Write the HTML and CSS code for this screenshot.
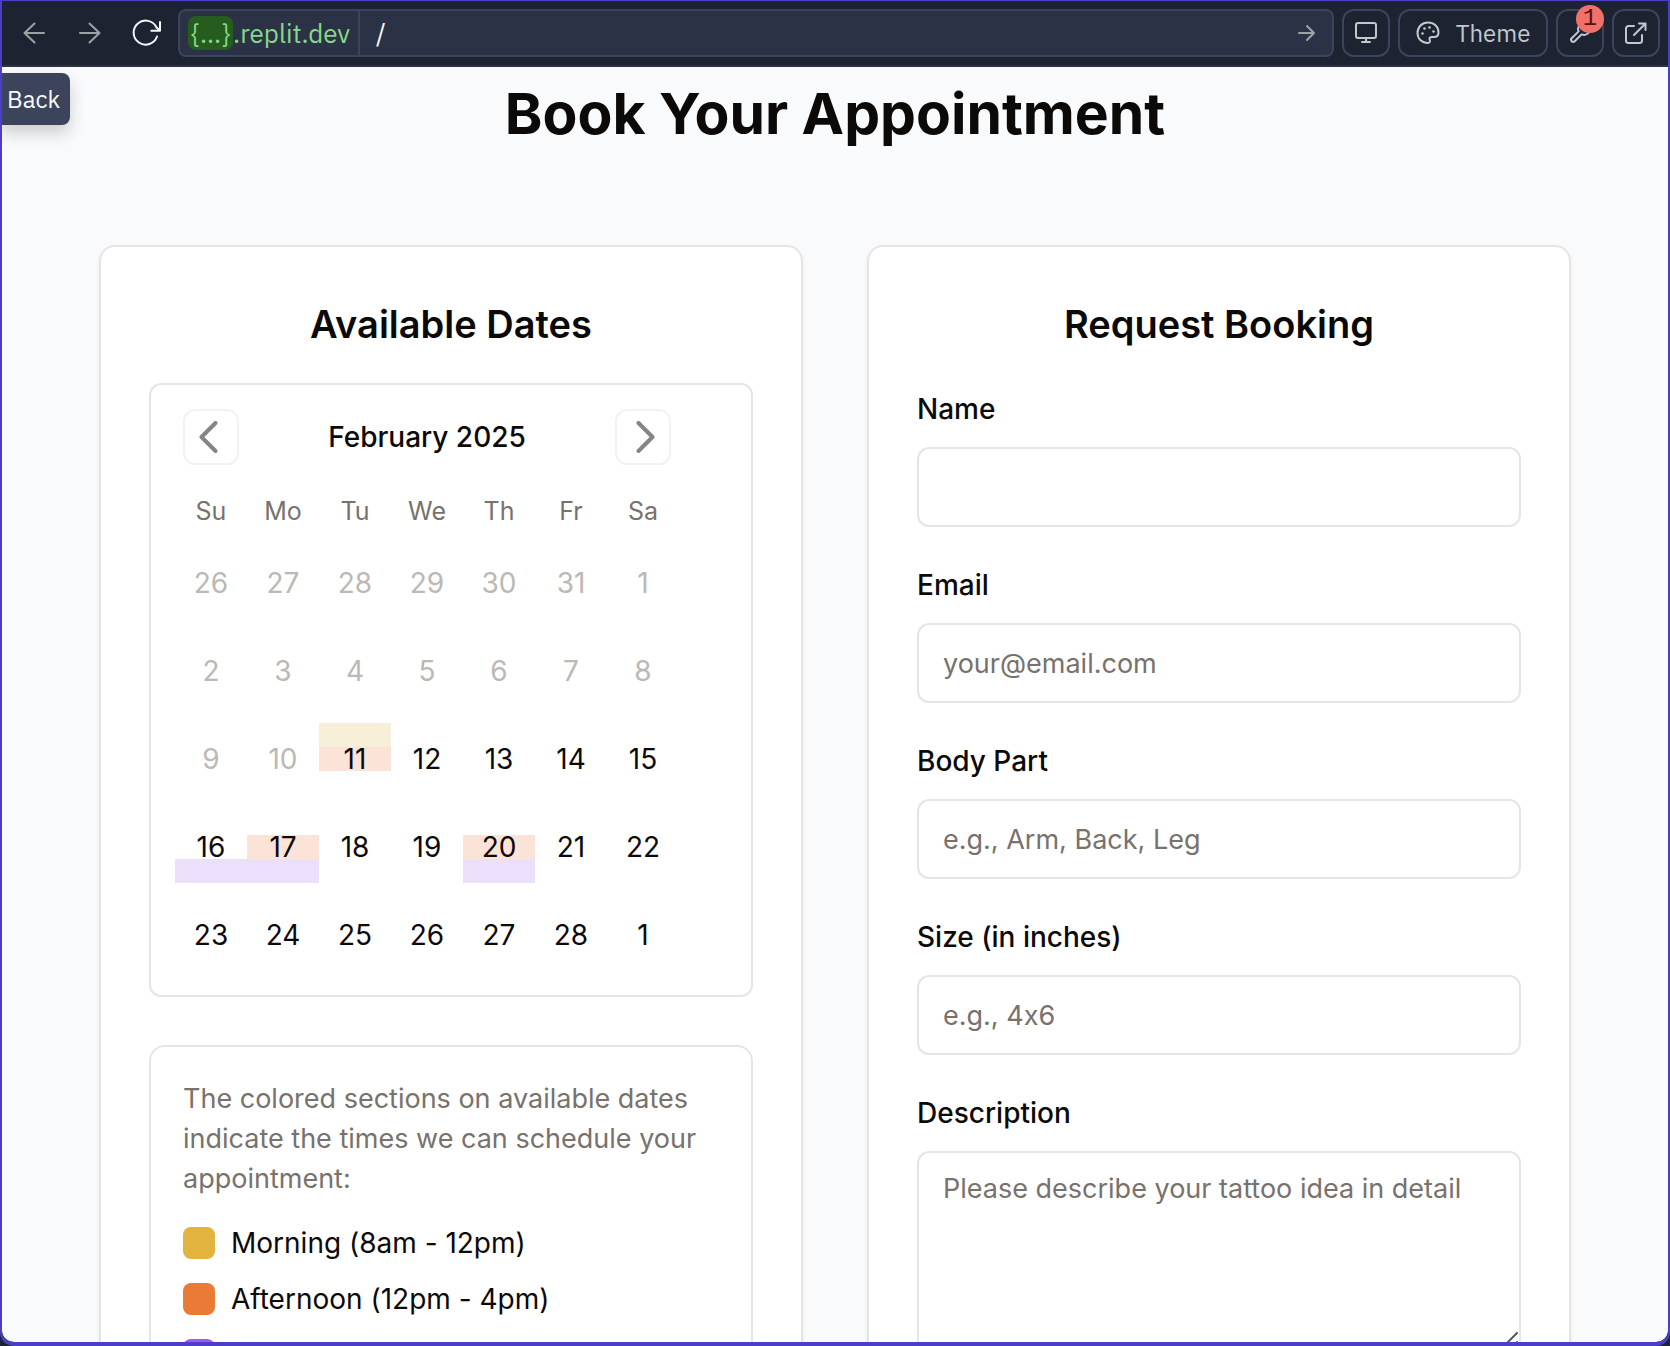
FILE: index.html
```html
<!DOCTYPE html>
<html lang="en">
<head>
<meta charset="utf-8">
<meta name="viewport" content="width=device-width, initial-scale=1">
<title>Book Your Appointment</title>
<link rel="stylesheet" href="styles.css">
</head>
<body>
<div class="frame">
  <header class="toolbar">
    <nav class="history" aria-label="History">
      <button class="nav-btn" type="button" aria-label="Back"><svg width="24" height="24" viewBox="0 0 24 24"><path d="M22 12H2.500M12.500 2.500 2.500 12l10 9.500"/></svg></button>
      <button class="nav-btn" type="button" aria-label="Forward"><svg width="24" height="24" viewBox="0 0 24 24"><path d="M2 12h19.500M11.500 2.500l10 9.500-10 9.500"/></svg></button>
      <button class="nav-btn reload" type="button" aria-label="Reload"><svg width="32" height="32" viewBox="0 0 32 32"><path d="M27 19.500A12 12 0 1 1 26.500 10.500L30 13.500M30 5v8.700h-8.700"/></svg></button>
    </nav>
    <div class="address">
      <span class="host"><span class="host-pill">{...}</span>.replit.dev</span>
      <input class="path" type="text" value="/" aria-label="Path">
      <button class="go" type="button" aria-label="Go"><svg width="18" height="18" viewBox="0 0 18 18"><path d="M1 9h15M9 2l7 7-7 7"/></svg></button>
    </div>
    <button class="tool" type="button" aria-label="Device size"><svg width="24" height="24" viewBox="0 0 24 24"><rect x="2" y="2" width="20" height="15" rx="2"/><path d="M12 17v4M8 21h8"/></svg></button>
    <button class="tool tool-theme" type="button">
      <svg width="24" height="24" viewBox="0 0 24 24"><path d="M12 1.500C6 1.500 1.500 6 1.500 12S6 22 12 22c1.800 0 2.300-1.500 1.700-2.800-.8-1.800.2-3.200 2.100-3.200H18c3 0 4.500-2 4.500-4.500C22.500 5.500 18 1.500 12 1.500z"/><g class="dots"><circle cx="6.500" cy="12.500" r="1.300"/><circle cx="8.500" cy="7.500" r="1.300"/><circle cx="13.500" cy="6.500" r="1.300"/><circle cx="17.500" cy="10.500" r="1.300"/></g></svg>
      <span>Theme</span>
    </button>
    <button class="tool" type="button" aria-label="Developer tools, 1 issue"><svg width="24" height="24" viewBox="0 0 24 24"><path d="M14.700 6.300a1 1 0 0 0 0 1.400l1.600 1.600a1 1 0 0 0 1.400 0l3.800-3.800a6 6 0 0 1-7.900 7.900l-6.900 6.900a2.100 2.100 0 0 1-3-3l6.900-6.900a6 6 0 0 1 7.900-7.900z"/></svg><span class="count">1</span></button>
    <button class="tool" type="button" aria-label="Open in new tab"><svg width="24" height="24" viewBox="0 0 24 24"><path d="M10 5H4.500A2.500 2.500 0 0 0 2 7.500v12A2.500 2.500 0 0 0 4.500 22h11a2.500 2.500 0 0 0 2.500-2.500V14M15 2.500h6.500V9M21.500 2.500 10 14"/></svg></button>
  </header>
  <div class="tooltip" role="tooltip">Back</div>

  <main class="preview">
    <h1>Book Your Appointment</h1>
    <div class="columns">
      <section class="card">
        <h2>Available Dates</h2>
        <div class="calendar">
          <div class="calendar-inner">
            <div class="month-bar">
              <button class="month-btn" type="button" aria-label="Previous month"><svg width="32" height="32" viewBox="0 0 32 32"><path d="M20.500 2 6.500 16l14 14"/></svg></button>
              <div class="month">February 2025</div>
              <button class="month-btn" type="button" aria-label="Next month"><svg width="32" height="32" viewBox="0 0 32 32"><path d="M11.500 2l14 14-14 14"/></svg></button>
            </div>
            <table class="days">
              <thead><tr><th>Su</th><th>Mo</th><th>Tu</th><th>We</th><th>Th</th><th>Fr</th><th>Sa</th></tr></thead>
              <tbody>
                <tr><td><button type="button" disabled>26</button></td><td><button type="button" disabled>27</button></td><td><button type="button" disabled>28</button></td><td><button type="button" disabled>29</button></td><td><button type="button" disabled>30</button></td><td><button type="button" disabled>31</button></td><td><button type="button" disabled>1</button></td></tr>
                <tr><td><button type="button" disabled>2</button></td><td><button type="button" disabled>3</button></td><td><button type="button" disabled>4</button></td><td><button type="button" disabled>5</button></td><td><button type="button" disabled>6</button></td><td><button type="button" disabled>7</button></td><td><button type="button" disabled>8</button></td></tr>
                <tr><td><button type="button" disabled>9</button></td><td><button type="button" disabled>10</button></td><td><button type="button" class="morning afternoon">11</button></td><td><button type="button">12</button></td><td><button type="button">13</button></td><td><button type="button">14</button></td><td><button type="button">15</button></td></tr>
                <tr><td><button type="button" class="evening">16</button></td><td><button type="button" class="afternoon evening">17</button></td><td><button type="button">18</button></td><td><button type="button">19</button></td><td><button type="button" class="afternoon evening">20</button></td><td><button type="button">21</button></td><td><button type="button">22</button></td></tr>
                <tr><td><button type="button">23</button></td><td><button type="button">24</button></td><td><button type="button">25</button></td><td><button type="button">26</button></td><td><button type="button">27</button></td><td><button type="button">28</button></td><td><button type="button">1</button></td></tr>
              </tbody>
            </table>
          </div>
        </div>
        <div class="legend">
          <p>The colored sections on available dates indicate the times we can schedule your appointment:</p>
          <ul>
            <li><span class="swatch swatch-morning"></span>Morning (8am - 12pm)</li>
            <li><span class="swatch swatch-afternoon"></span>Afternoon (12pm - 4pm)</li>
            <li><span class="swatch swatch-evening"></span></li>
          </ul>
        </div>
      </section>

      <section class="card">
        <h2>Request Booking</h2>
        <form class="form">
          <div class="field"><label for="name">Name</label><input id="name" type="text"></div>
          <div class="field"><label for="email">Email</label><input id="email" type="email" placeholder="your@email.com"></div>
          <div class="field"><label for="part">Body Part</label><input id="part" type="text" placeholder="e.g., Arm, Back, Leg"></div>
          <div class="field"><label for="size">Size (in inches)</label><input id="size" type="text" placeholder="e.g., 4x6"></div>
          <div class="field">
            <label for="description">Description</label>
            <div class="area">
              <textarea id="description" placeholder="Please describe your tattoo idea in detail"></textarea>
              <svg class="grip" width="20" height="20" viewBox="0 0 20 20"><path d="M2 18 18 2M11 18l7-7"/></svg>
            </div>
          </div>
        </form>
      </section>
    </div>
  </main>
</div>
</body>
</html>
```
FILE: styles.css
```css
* { box-sizing: border-box; }

body {
  margin: 0;
  background: #1c2333;
  color: #0c0a09;
  font-family: Inter, "Liberation Sans", sans-serif;
  font-size: 28px;
  font-variant-ligatures: no-contextual;
  line-height: 40px;
}

button, input, textarea { font: inherit; color: inherit; font-variant-ligatures: inherit; }
button { padding: 0; border: 0; background: none; }
svg { display: block; flex: none; fill: none; stroke: currentColor; stroke-width: 2; stroke-linecap: round; stroke-linejoin: round; }

.frame {
  position: relative;
  display: flex;
  flex-direction: column;
  height: 100vh;
  overflow: hidden;
  border: 2px solid #4b3fc9;
  border-top-width: 1px;
  border-bottom-width: 4px;
  border-radius: 0 0 14px 14px;
}

/* Browser toolbar */
.toolbar {
  display: flex;
  flex: none;
  align-items: center;
  gap: 8px;
  height: 66px;
  padding: 0 8px 0 4px;
  border-bottom: 2px solid #2b3245;
  background: #1e2332;
  color: #c2c8cc;
  font-family: "IBM Plex Sans", "Noto Sans", sans-serif;
  font-size: 24px;
  line-height: 32px;
}
.history { display: flex; }
.nav-btn { display: flex; align-items: center; justify-content: center; width: 56px; height: 48px; color: #9da2a6; }
.reload { color: #f5f9fc; }

.address {
  display: flex;
  flex: 1;
  align-items: stretch;
  height: 48px;
  margin-left: -4px;
  border: 2px solid #3c445c;
  border-radius: 8px;
  background: #2b3245;
  font-size: 26px;
}
.host { display: flex; align-items: center; padding: 0 8px; border-right: 2px solid #3c445c; color: #86d88a; }
.host-pill { padding: 0 3px; border-radius: 8px; background: #265c1e; line-height: 34px; }
.path { flex: 1; min-width: 0; padding: 0 16px; border: 0; background: none; color: #f5f9fc; outline: 0; }
.go { display: flex; align-items: center; padding: 0 16px; color: #9da2a6; }

.tool {
  position: relative;
  display: flex;
  align-items: center;
  justify-content: center;
  width: 48px;
  height: 48px;
  border: 2px solid #3c445c;
  border-radius: 12px;
}
.tool-theme { gap: 16px; width: 150px; }
.dots { fill: currentColor; stroke: none; }
.count {
  position: absolute;
  top: -6px;
  right: -2px;
  width: 28px;
  height: 28px;
  border-radius: 14px;
  background: #f0716a;
  color: #5c0f0c;
  font-family: "Liberation Mono", monospace;
  line-height: 28px;
  text-align: center;
}

.tooltip {
  position: absolute;
  top: 72px;
  left: -2px;
  z-index: 1;
  padding: 10px 10px 10px 7px;
  border-radius: 0 8px 8px 0;
  background: #3c445c;
  box-shadow: 0 8px 16px rgba(30, 35, 20, 0.2);
  color: #f5f9fc;
  font-family: "IBM Plex Sans", "Noto Sans", sans-serif;
  font-size: 24px;
  line-height: 32px;
}

/* Previewed page */
.preview {
  flex: 1;
  min-height: 0;
  overflow: hidden;
  padding: 11px 32px 0;
  border-radius: 0 0 12px 12px;
  background: #f9fafc;
}
h1 { margin: 0 0 95px; font-size: 57px; font-weight: 700; line-height: 72px; text-align: center; }
h2 { margin: 0 0 30px; font-size: 38px; font-weight: 600; line-height: 58px; text-align: center; }

.columns {
  display: grid;
  grid-template-columns: repeat(2, minmax(0, 1fr));
  gap: 64px;
  max-width: 1472px;
  margin: 0 auto;
}
.card {
  padding: 48px;
  border: 2px solid #e7e5e4;
  border-radius: 16px;
  background: #fff;
  box-shadow: 0 2px 4px rgba(0, 0, 0, 0.05);
}

.calendar { padding: 24px; border: 2px solid #e5e5e5; border-radius: 12px; }
.calendar-inner { width: 504px; max-width: 100%; }
.month-bar { display: flex; align-items: center; justify-content: space-between; padding: 0 8px; margin-bottom: 32px; }
.month { font-weight: 500; }
.month-btn {
  display: flex;
  align-items: center;
  justify-content: center;
  width: 56px;
  height: 56px;
  border: 2px solid #f2f2f2;
  border-radius: 12px;
  color: #858585;
}
.month-btn svg { stroke-width: 4; }

.days { width: 100%; border-spacing: 0; table-layout: fixed; }
.days th { padding: 0 0 6px; color: #78716c; font-size: 25px; font-weight: 400; line-height: 28px; }
.days td { padding: 16px 0 0; }
.days button { display: block; width: 100%; height: 72px; text-align: center; }
.days button:disabled { color: #bbb8b5; }
.evening { background: linear-gradient(transparent 48px, #ecdffb 48px); }
.morning.afternoon { background: linear-gradient(#f8efd9 0 24px, #fce3d8 24px 48px, transparent 48px); }
.afternoon.evening { background: linear-gradient(transparent 24px, #fce3d8 24px 48px, #ecdffb 48px); }

.legend { margin-top: 48px; padding: 32px; border: 2px solid #e5e5e5; border-radius: 16px; }
.legend p { margin: 0 0 24px; color: #78716c; font-size: 27px; }
.legend ul { display: grid; gap: 16px; margin: 0; padding: 0; list-style: none; }
.legend li { display: flex; align-items: center; gap: 16px; min-height: 40px; }
.swatch { width: 32px; height: 32px; border-radius: 8px; }
.swatch-morning { background: #e2b33f; }
.swatch-afternoon { background: #e97b36; }
.swatch-evening { background: #9b5bf0; }

.form { display: grid; gap: 32px; }
.field { display: grid; gap: 12px; }
.field label { font-weight: 500; line-height: 52px; }
.field input, .field textarea {
  display: block;
  width: 100%;
  height: 80px;
  padding: 16px 24px;
  border: 2px solid #e5e5e5;
  border-radius: 12px;
  background: #fff;
  font-size: 27px;
}
.field textarea { height: 200px; resize: none; }
.field ::placeholder { color: #78716c; opacity: 1; }
.area { position: relative; }
.grip { position: absolute; right: 2px; bottom: 0; color: #555; }
```
